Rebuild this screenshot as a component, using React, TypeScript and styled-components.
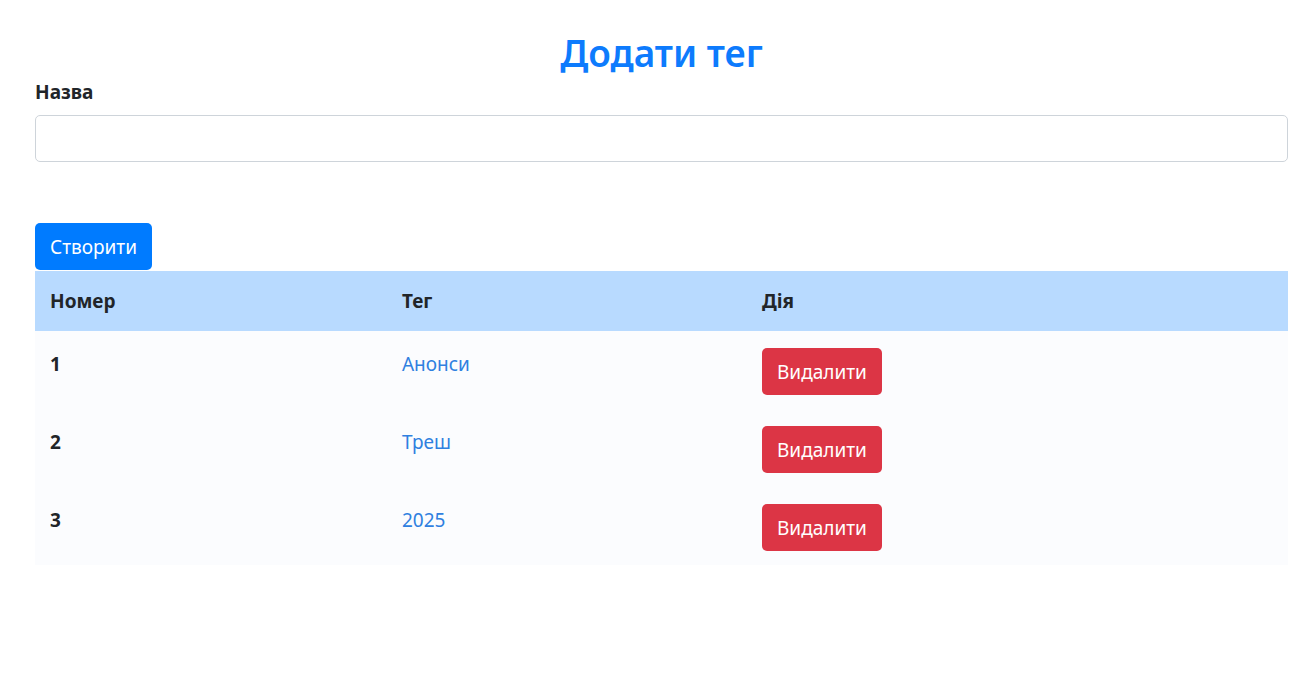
import styled, {createGlobalStyle} from 'styled-components';

const GlobalStyle = createGlobalStyle`
  body {
    margin: 0;
    background: #ffffff;
    font-family: 'Noto Sans', 'Open Sans', sans-serif;
    color: #212529;
  }
`;

const Page = styled.div`
  padding: 29px 24px 0 35px;
`;

const Title = styled.h1`
  margin: 0;
  text-align: center;
  font-size: 37px;
  line-height: 48px;
  font-weight: 600;
  color: #0d7bfd;
`;

const Label = styled.label`
  display: block;
  font-size: 19px;
  line-height: 30px;
  font-weight: 700;
  margin-bottom: 8px;
`;

const Input = styled.input`
  display: block;
  box-sizing: border-box;
  width: 100%;
  height: 47px;
  border: 1px solid #ced4da;
  border-radius: 5px;
  padding: 7px 15px;
  font-size: 20px;
  font-family: inherit;
  outline: none;
`;

const Button = styled.button<{variant: 'primary' | 'danger'}>`
  display: inline-block;
  height: 47px;
  padding: 0 15px;
  border: none;
  border-radius: 5px;
  font-family: inherit;
  font-size: 19px;
  color: #ffffff;
  background: ${p => (p.variant === 'primary' ? '#007bff' : '#dc3545')};
  cursor: pointer;
`;

const CreateRow = styled.div`
  margin-top: 61px;
  margin-bottom: 1px;
`;

const Table = styled.table`
  width: 100%;
  border-collapse: collapse;
  background: #fbfcfe;
  font-size: 19px;
`;

const HeadCell = styled.th<{w?: number}>`
  text-align: left;
  font-weight: 700;
  padding: 15px;
  line-height: 30px;
  background: #b8daff;
  width: ${p => (p.w ? `${p.w}px` : 'auto')};
`;

const Cell = styled.td<{bold?: boolean}>`
  padding: 18px 15px 13px;
  vertical-align: top;
  line-height: 30px;
  font-weight: ${p => (p.bold ? 700 : 400)};
`;

const ActionCell = styled.td`
  padding: 17px 15px 14px;
  vertical-align: top;
`;

const TagLink = styled.a`
  color: #2f80e0;
  text-decoration: none;
`;

const tags = [
  {id: 1, name: 'Анонси'},
  {id: 2, name: 'Треш'},
  {id: 3, name: '2025'},
];

const App = () => {
  return (
    <>
      <GlobalStyle />
      <Page>
        <Title>Додати тег</Title>
        <Label htmlFor="tag-name">Назва</Label>
        <Input id="tag-name" type="text" />
        <CreateRow>
          <Button variant="primary">Створити</Button>
        </CreateRow>
        <Table>
          <thead>
            <tr>
              <HeadCell w={322}>Номер</HeadCell>
              <HeadCell w={330}>Тег</HeadCell>
              <HeadCell>Дія</HeadCell>
            </tr>
          </thead>
          <tbody>
            {tags.map(tag => (
              <tr key={tag.id}>
                <Cell bold>{tag.id}</Cell>
                <Cell>
                  <TagLink href="#">{tag.name}</TagLink>
                </Cell>
                <ActionCell>
                  <Button variant="danger">Видалити</Button>
                </ActionCell>
              </tr>
            ))}
          </tbody>
        </Table>
      </Page>
    </>
  );
};

export default App;
